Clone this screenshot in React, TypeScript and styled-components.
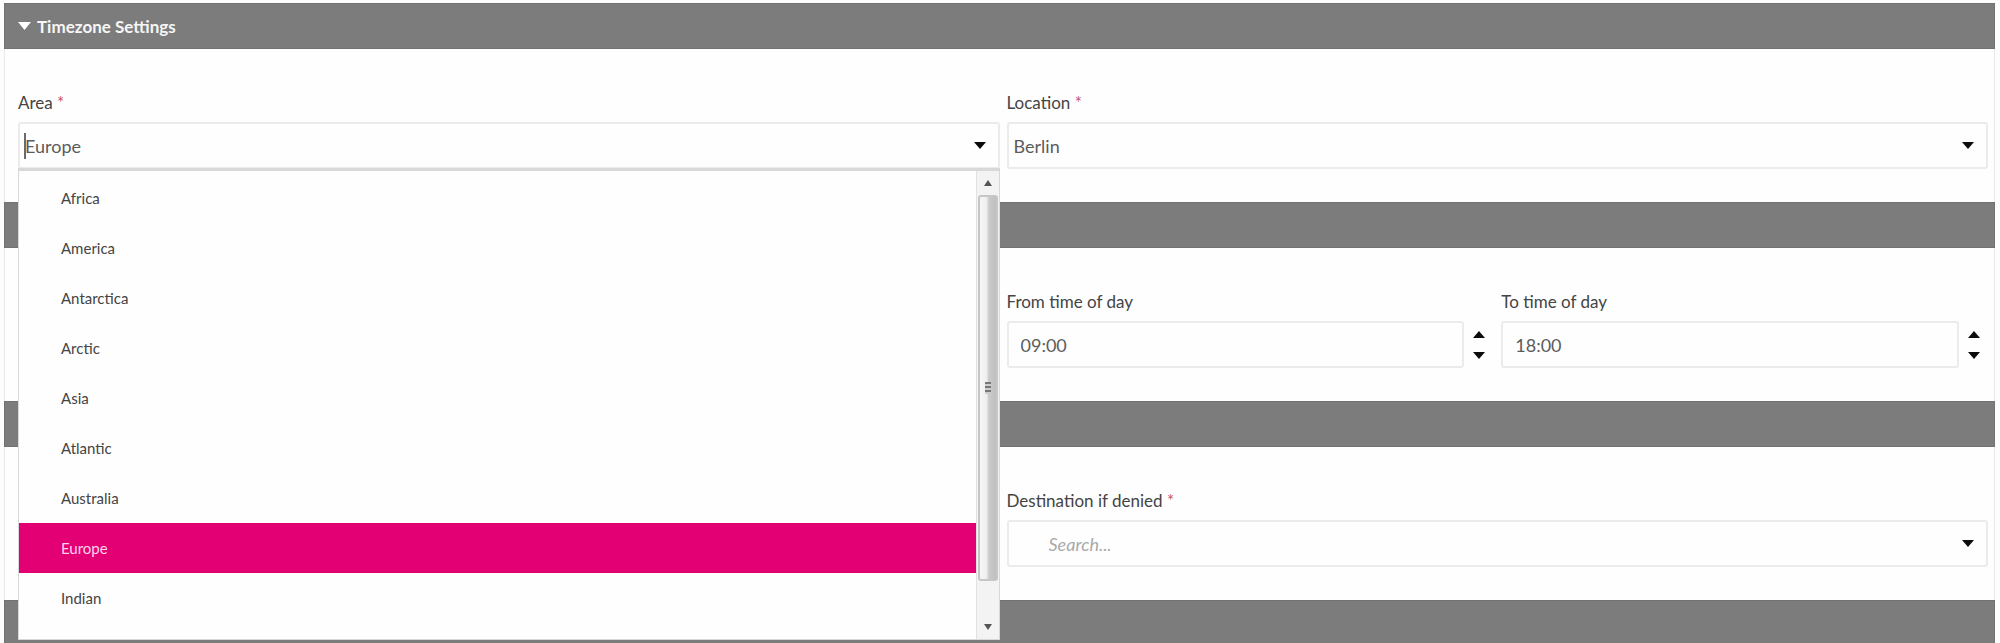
import React, { useState } from "react";
import styled, { createGlobalStyle } from "styled-components";

const GlobalStyle = createGlobalStyle`
  *, *::before, *::after { box-sizing: border-box; }
  body { margin: 0; background: #fdfdfd; }
  body, button, input, select {
    font-family: Lato, "Liberation Sans", sans-serif;
    font-size: 17px;
    color: #4b4b4b;
  }
`;

const Page = styled.main`
  height: 100vh;
  overflow: hidden;
  padding: 3px 5px 0 4px;
`;

const Section = styled.section``;

const SectionBar = styled.div`
  height: 46px;
  background: #7c7c7c;
  border: 1px solid #727272;
`;

const SectionToggle = styled.button`
  display: flex;
  align-items: center;
  gap: 6px;
  width: 100%;
  height: 100%;
  padding: 0 13px;
  border: 0;
  background: none;
  color: #f6f6f6;
  font-size: 17px;
  font-weight: 700;
  cursor: pointer;
`;

const SectionBody = styled.div`
  display: grid;
  grid-template-columns: 1fr 1fr;
  column-gap: 7px;
  padding: 42px 6px 33px 13px;
  border: solid #e9e9e9;
  border-width: 0 1px;
  background: #fefefe;
`;

const Field = styled.div<{ $column?: number }>`
  position: relative;
  display: flex;
  flex-direction: column;
  gap: 7px;
  min-width: 0;
  grid-column: ${(p) => p.$column ?? "auto"};
`;

const Label = styled.label`
  line-height: 24px;
  color: #444;
`;

const Required = styled.span`
  color: #c4566e;
`;

const Control = styled.div`
  position: relative;
  display: flex;
  align-items: center;
  height: 47px;
`;

const controlBox = `
  flex: 1;
  min-width: 0;
  width: 100%;
  height: 100%;
  border: 2px solid #ebebeb;
  border-radius: 3px;
  background: #fefefe;
  color: #5c5c5c;
  font-size: 18px;
  outline: none;
`;

const TextInput = styled.input<{ $indent: number }>`
  ${controlBox}
  padding: 0 40px 0 ${(p) => p.$indent}px;
  &::placeholder { color: #a9a9a9; font-style: italic; opacity: 1; }
`;

const Select = styled.select`
  ${controlBox}
  appearance: none;
  padding: 0 40px 0 5px;
`;

const ControlArrow = styled.span`
  position: absolute;
  right: 14px;
  display: flex;
  pointer-events: none;
`;

const Caret = styled.span`
  position: absolute;
  left: 6px;
  width: 2px;
  height: 26px;
  background: #6b6b6b;
`;

const TimePair = styled.div`
  grid-column: 2;
  display: grid;
  grid-template-columns: 1fr 1fr;
  column-gap: 8px;
`;

const Stepper = styled.div`
  display: flex;
  flex-direction: column;
  align-items: center;
  gap: 4px;
  width: 29px;
`;

const StepButton = styled.button`
  display: flex;
  align-items: center;
  justify-content: center;
  width: 20px;
  height: 17px;
  padding: 0;
  border: 0;
  background: none;
`;

const Menu = styled.div`
  position: absolute;
  z-index: 2;
  top: 100%;
  left: 0;
  right: 0;
  display: flex;
  height: 472px;
  margin-top: -1px;
  border: solid #d8d8d8;
  border-width: 3px 1px 1px;
  background: #fefefe;
`;

const OptionList = styled.ul`
  flex: 1;
  margin: 0;
  padding: 2px 0 0;
  overflow: hidden;
  list-style: none;
`;

const Option = styled.li<{ $active: boolean }>`
  height: 50px;
  padding-left: 42px;
  font-size: 15px;
  line-height: 50px;
  cursor: pointer;
  background: ${(p) => (p.$active ? "#e20074" : "transparent")};
  color: ${(p) => (p.$active ? "#ffd3ea" : "#444")};
`;

const ScrollTrack = styled.div`
  display: flex;
  flex-direction: column;
  align-items: center;
  width: 23px;
  border-left: 1px solid #e2e2e2;
  background: #f3f3f3;
`;

const ScrollEnd = styled.span`
  display: flex;
  align-items: center;
  justify-content: center;
  width: 100%;
  height: 24px;
`;

const ScrollThumb = styled.div`
  display: flex;
  align-items: center;
  justify-content: center;
  width: 20px;
  height: 386px;
  margin-bottom: auto;
  border: 2px solid #c6c6c6;
  border-radius: 3px;
  background: linear-gradient(90deg, #f7f7f7 0%, #efefef 40%, #cbcbcb 55%, #bfbfbf 100%);
`;

const Grip = styled.span`
  width: 6px;
  height: 12px;
  background: repeating-linear-gradient(#777 0 2px, #ccc 2px 4px);
`;

type TriangleProps = { up?: boolean; color?: string; width?: number; height?: number };

function Triangle({ up, color = "#0c0c0c", width = 12, height = 7 }: TriangleProps) {
  return (
    <svg width={width} height={height} viewBox="0 0 12 7" preserveAspectRatio="none" aria-hidden="true">
      <path d={up ? "M0 7 L6 0 L12 7 Z" : "M0 0 L12 0 L6 7 Z"} fill={color} />
    </svg>
  );
}

function TimeField({ id, label, initial }: { id: string; label: string; initial: string }) {
  const [value, setValue] = useState(initial);
  const step = (delta: number) => {
    const hour = (parseInt(value, 10) + delta + 24) % 24;
    setValue(`${String(hour).padStart(2, "0")}:00`);
  };
  return (
    <Field>
      <Label htmlFor={id}>{label}</Label>
      <Control>
        <TextInput id={id} $indent={12} value={value} onChange={(e) => setValue(e.target.value)} />
        <Stepper>
          <StepButton type="button" aria-label="Later" onClick={() => step(1)}>
            <Triangle up />
          </StepButton>
          <StepButton type="button" aria-label="Earlier" onClick={() => step(-1)}>
            <Triangle />
          </StepButton>
        </Stepper>
      </Control>
    </Field>
  );
}

const AREAS = ["Africa", "America", "Antarctica", "Arctic", "Asia", "Atlantic", "Australia", "Europe", "Indian"];

function AreaField() {
  const [area, setArea] = useState("Europe");
  const [open, setOpen] = useState(true);
  return (
    <Field>
      <Label htmlFor="area">
        Area <Required>*</Required>
      </Label>
      <Control>
        <TextInput
          id="area"
          role="combobox"
          aria-expanded={open}
          aria-controls="area-options"
          $indent={5}
          value={area}
          onChange={(e) => setArea(e.target.value)}
          onClick={() => setOpen(!open)}
        />
        {open && <Caret />}
        <ControlArrow>
          <Triangle />
        </ControlArrow>
        {open && (
          <Menu>
            <OptionList id="area-options" role="listbox" aria-label="Area">
              {AREAS.map((name) => (
                <Option
                  key={name}
                  role="option"
                  aria-selected={name === area}
                  $active={name === area}
                  onClick={() => {
                    setArea(name);
                    setOpen(false);
                  }}
                >
                  {name}
                </Option>
              ))}
            </OptionList>
            <ScrollTrack aria-hidden="true">
              <ScrollEnd>
                <Triangle up color="#555" width={8} height={6} />
              </ScrollEnd>
              <ScrollThumb>
                <Grip />
              </ScrollThumb>
              <ScrollEnd>
                <Triangle color="#555" width={8} height={6} />
              </ScrollEnd>
            </ScrollTrack>
          </Menu>
        )}
      </Control>
    </Field>
  );
}

export default function App() {
  return (
    <>
      <GlobalStyle />
      <Page>
        <Section>
          <SectionBar>
            <SectionToggle type="button" aria-expanded="true">
              <Triangle color="#fff" width={13} height={8} />
              Timezone Settings
            </SectionToggle>
          </SectionBar>
          <SectionBody>
            <AreaField />
            <Field>
              <Label htmlFor="location">
                Location <Required>*</Required>
              </Label>
              <Control>
                <Select id="location" defaultValue="Berlin">
                  <option>Berlin</option>
                </Select>
                <ControlArrow>
                  <Triangle />
                </ControlArrow>
              </Control>
            </Field>
          </SectionBody>
        </Section>
        <Section>
          <SectionBar />
          <SectionBody>
            <TimePair>
              <TimeField id="from-time" label="From time of day" initial="09:00" />
              <TimeField id="to-time" label="To time of day" initial="18:00" />
            </TimePair>
          </SectionBody>
        </Section>
        <Section>
          <SectionBar />
          <SectionBody>
            <Field $column={2}>
              <Label htmlFor="destination">
                Destination if denied <Required>*</Required>
              </Label>
              <Control>
                <TextInput id="destination" $indent={40} placeholder="Search..." />
                <ControlArrow>
                  <Triangle />
                </ControlArrow>
              </Control>
            </Field>
          </SectionBody>
        </Section>
        <Section>
          <SectionBar />
        </Section>
      </Page>
    </>
  );
}
